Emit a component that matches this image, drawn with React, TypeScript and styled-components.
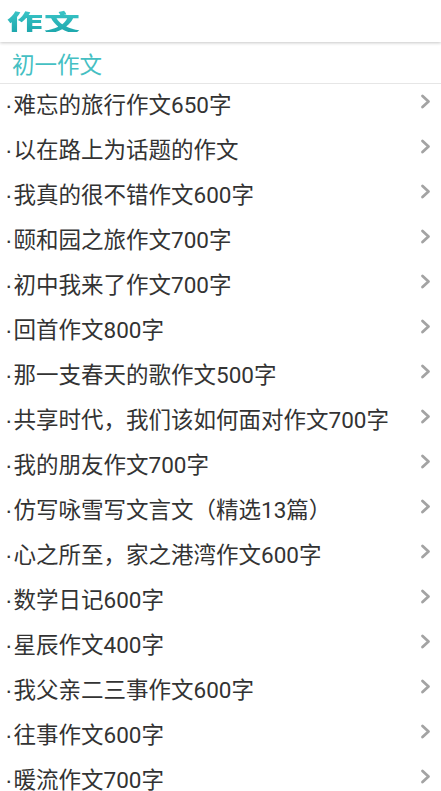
import { createGlobalStyle, styled } from "styled-components";

const GlobalStyle = createGlobalStyle`
    html, body {
        margin: 0;
        padding: 0;
        background: #ffffff;
        overflow: hidden;
    }
    body {
        font-family: Roboto, "Noto Sans CJK SC", sans-serif;
    }
`;

const Screen = styled.div`
    width: 441px;
    height: 791px;
    display: flex;
    flex-direction: column;
    overflow: hidden;
    background: #ffffff;
`;

const TopBar = styled.header`
    flex-shrink: 0;
    height: 42px;
    display: flex;
    align-items: center;
    padding-left: 7px;
    box-sizing: border-box;
    box-shadow: 0 1px 3px rgba(0, 0, 0, 0.22);
    position: relative;
    z-index: 1;
`;

const Logo = styled.h1`
    margin: 0;
    font-family: "Noto Sans CJK SC", sans-serif;
    font-size: 28px;
    font-weight: 900;
    line-height: 1;
    letter-spacing: 1px;
    background: linear-gradient(180deg, #3cc6c8 0%, #1ea8ad 100%);
    -webkit-background-clip: text;
    background-clip: text;
    color: transparent;
    transform: scale(1.28, 0.8);
    transform-origin: left center;
`;

const SectionTitle = styled.div`
    flex-shrink: 0;
    height: 42px;
    display: flex;
    align-items: center;
    padding-left: 12px;
    box-sizing: border-box;
    font-size: 22.5px;
    color: #45bfc3;
    border-bottom: 1px solid #e6e6e6;
`;

const List = styled.ul`
    flex-shrink: 0;
    list-style: none;
    margin: 0;
    padding: 0;
`;

const Row = styled.li`
    height: 45px;
    display: flex;
    align-items: center;
    justify-content: space-between;
    padding: 0 10px 0 5px;
    box-sizing: border-box;
`;

const Title = styled.span`
    font-size: 22.5px;
    color: #333333;
    white-space: nowrap;
    padding-bottom: 8px;
`;

const Dot = styled.span`
    font-family: "Liberation Sans", sans-serif;
    margin-right: 1px;
`;

const Chevron = styled.svg`
    width: 11px;
    height: 15px;
    flex-shrink: 0;
    margin-bottom: 10px;
`;

const items = [
    "难忘的旅行作文650字",
    "以在路上为话题的作文",
    "我真的很不错作文600字",
    "颐和园之旅作文700字",
    "初中我来了作文700字",
    "回首作文800字",
    "那一支春天的歌作文500字",
    "共享时代，我们该如何面对作文700字",
    "我的朋友作文700字",
    "仿写咏雪写文言文（精选13篇）",
    "心之所至，家之港湾作文600字",
    "数学日记600字",
    "星辰作文400字",
    "我父亲二三事作文600字",
    "往事作文600字",
    "暖流作文700字",
];

const App = () => {
    return (
        <Screen>
            <GlobalStyle />
            <TopBar>
                <Logo>作文</Logo>
            </TopBar>
            <SectionTitle>初一作文</SectionTitle>
            <List>
                {items.map((item) => (
                    <Row key={item}>
                        <Title>
                            <Dot>·</Dot>
                            {item}
                        </Title>
                        <Chevron viewBox="0 0 11 15">
                            <path d="M2.5 2 L8.5 7.5 L2.5 13" fill="none" stroke="#a3a3a3" strokeWidth="2.8" strokeLinecap="round" strokeLinejoin="round" />
                        </Chevron>
                    </Row>
                ))}
            </List>
        </Screen>
    );
};

export default App;
